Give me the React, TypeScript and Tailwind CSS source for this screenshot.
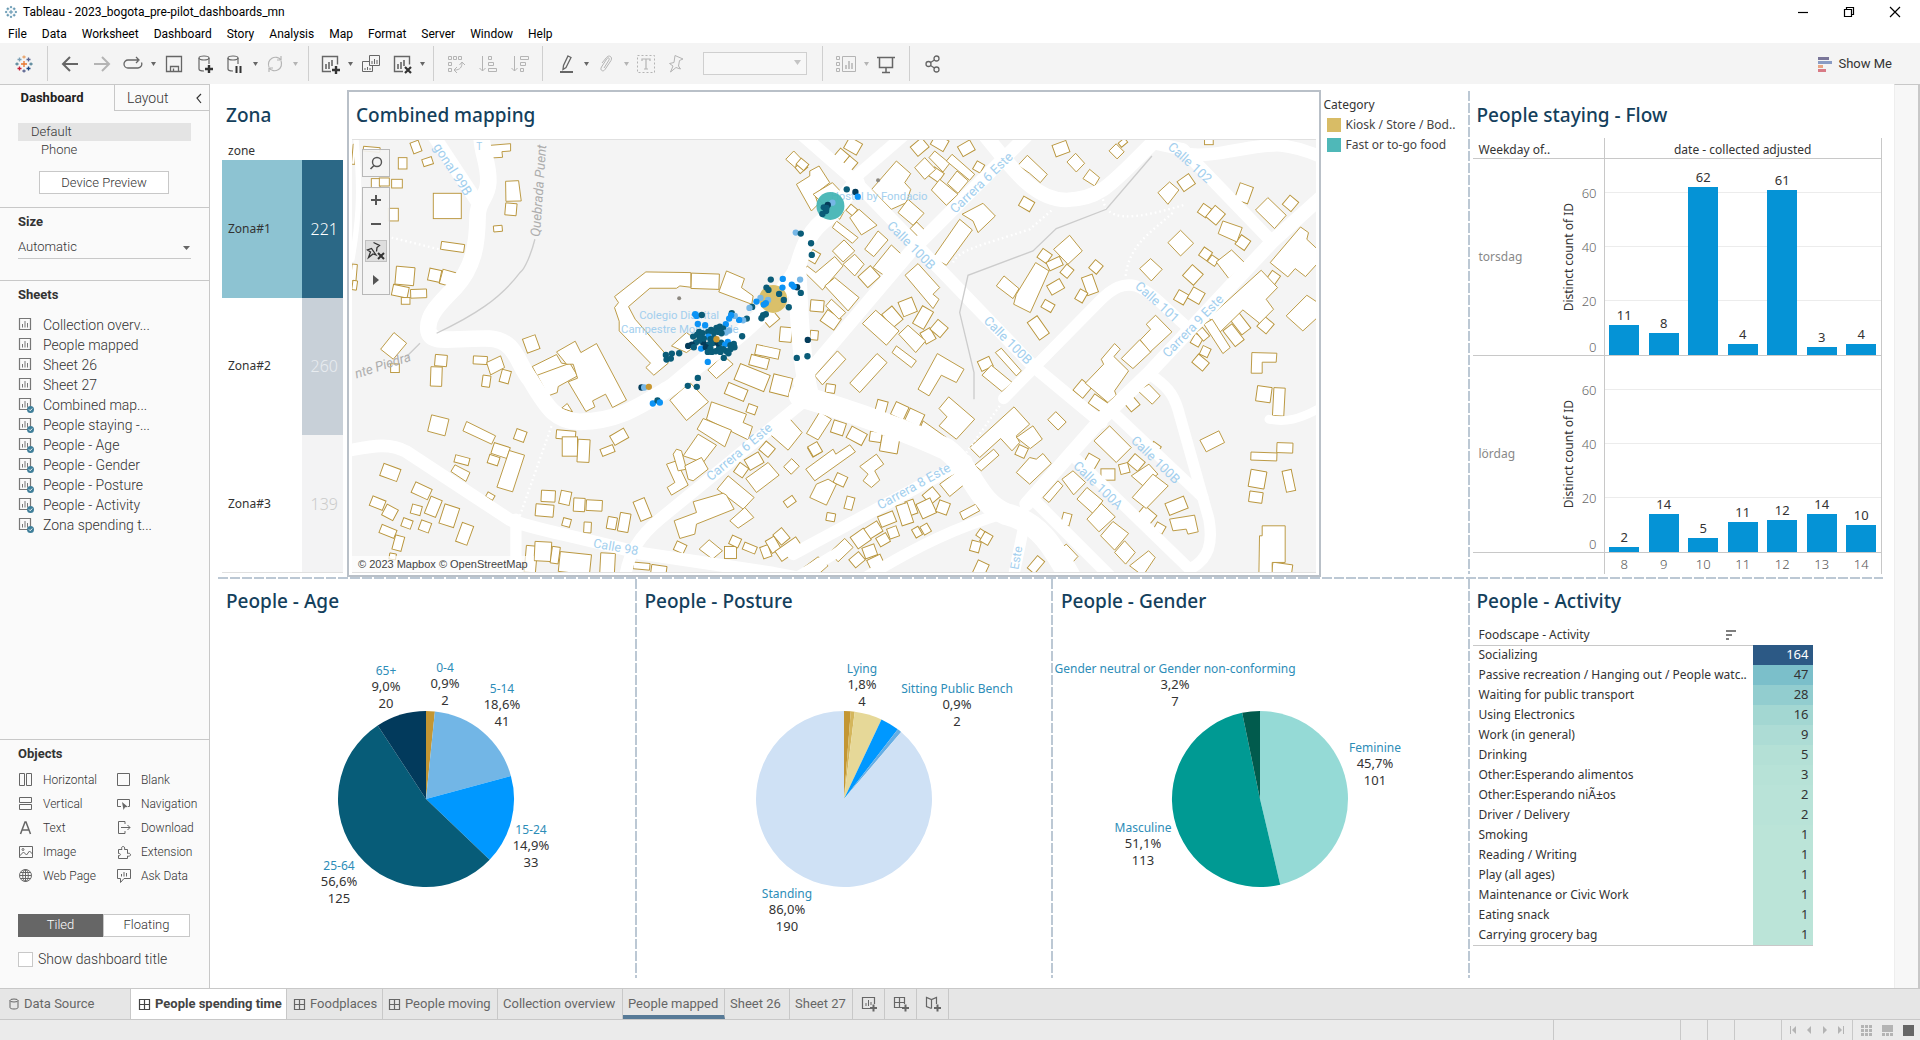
import React from "react";

type Children = { children: React.ReactNode };

/* ------------------------------------------------------------------ icons */

function Svg({ size = 20, className = "", children }: { size?: number; className?: string; children: React.ReactNode }) {
  return (
    <svg
      width={size}
      height={size}
      viewBox={`0 0 ${size} ${size}`}
      fill="none"
      stroke="currentColor"
      strokeWidth="1"
      className={`shrink-0 ${className}`}
      aria-hidden="true"
    >
      {children}
    </svg>
  );
}

function TableauLogo({ mono = false, size = 20 }: { mono?: boolean; size?: number }) {
  const pick = (c: string) => (mono ? "#4a86a5" : c);
  const crosses: [number, number, number, string][] = [
    [10, 10, 3, "#e8762c"],
    [5.5, 5.5, 2, "#7b9fb5"],
    [14.5, 5.5, 2, "#5b6591"],
    [5.5, 14.5, 2, "#c72037"],
    [14.5, 14.5, 2, "#1f457e"],
    [10, 3, 1.6, "#e8a26a"],
    [10, 17, 1.6, "#5b6591"],
    [3, 10, 1.6, "#59879b"],
    [17, 10, 1.6, "#59879b"],
  ];
  return (
    <svg width={size} height={size} viewBox="0 0 20 20" strokeWidth="1.3" aria-hidden="true">
      {crosses.map(([x, y, r, c]) => (
        <path key={`${x}-${y}`} d={`M${x - r} ${y}H${x + r}M${x} ${y - r}V${y + r}`} stroke={pick(c)} />
      ))}
    </svg>
  );
}

const Plus = ({ x, y }: { x: number; y: number }) => <path d={`M${x - 4} ${y}h8M${x} ${y - 4}v8`} strokeWidth="2.4" stroke="#333" />;

const icons = {
  back: (
    <Svg>
      <path d="M18 10H3M10 3L3 10l7 7" strokeWidth="2" />
    </Svg>
  ),
  forward: (
    <Svg>
      <path d="M2 10h15M10 3l7 7-7 7" strokeWidth="2" />
    </Svg>
  ),
  redo: (
    <Svg>
      <path d="M15 6H5a4 4 0 0 0 0 8h10a4 4 0 0 0 3.500-5.500M13 3l3 3-3 3" strokeWidth="1.3" />
    </Svg>
  ),
  save: (
    <Svg>
      <path d="M2.500 2.500h15v15h-15zM6.500 17.500v-5h8v5M9.500 14.500v3" strokeWidth="1.3" />
    </Svg>
  ),
  addData: (
    <Svg>
      <ellipse cx="9" cy="4" rx="5" ry="2" strokeWidth="1.2" />
      <path d="M4 4v11c0 1 2 2 5 2M14 4v6" strokeWidth="1.2" />
      <Plus x={14} y={15} />
    </Svg>
  ),
  pauseData: (
    <Svg>
      <ellipse cx="8" cy="4" rx="5" ry="2" strokeWidth="1.2" />
      <path d="M3 4v11c0 1 2 2 5 2M13 4v6" strokeWidth="1.2" />
      <path d="M11.500 12v7M15.500 12v7" strokeWidth="2" stroke="#333" />
    </Svg>
  ),
  refresh: (
    <Svg>
      <path d="M4 13A7 7 0 0 1 16 6M16 7A7 7 0 0 1 4 14M16 2v4h-4M4 18v-4h4" strokeWidth="1.2" />
    </Svg>
  ),
  newSheet: (
    <Svg>
      <path d="M11 17.500H2.500v-15h15v8" strokeWidth="1.4" />
      <path d="M6 10v5M9 8v7M12 6v6" strokeWidth="1.6" />
      <Plus x={16} y={16} />
    </Svg>
  ),
  duplicate: (
    <Svg>
      <path d="M8.500 1.500h10v10h-10zM8 7.500H1.500v10h10V12" />
      <path d="M11 7v3M13.500 5v5M16 6v4M4 14v2M6.500 13v3M9 14v2" />
    </Svg>
  ),
  clearSheet: (
    <Svg>
      <path d="M11 17.500H2.500v-15h15v8" strokeWidth="1.4" />
      <path d="M6 10v5M9 8v7M12 6v6" strokeWidth="1.6" />
      <path d="M13 13l6 6M19 13l-6 6" strokeWidth="2.200" stroke="#333" />
    </Svg>
  ),
  swap: (
    <Svg>
      <path d="M2.500 2.500h3v3h-3zM7.500 2.500h3v3h-3zM12.500 2.500h3v3h-3zM2.500 8.500h3v3h-3zM2.500 14.500h3v3h-3z" />
      <path d="M9 16c5 0 7-3 7-7M13.500 11L16 8l3 3M11 13l-3 3 3 3" />
    </Svg>
  ),
  sortAsc: (
    <Svg>
      <path d="M4.500 2v15M1.500 14l3 3 3-3M10.500 2.500h3v3h-3zM10.500 8.500h5v3h-5zM10.500 14.500h8v3h-8z" />
    </Svg>
  ),
  sortDesc: (
    <Svg>
      <path d="M4.500 2v15M1.500 14l3 3 3-3M10.500 2.500h8v3h-8zM10.500 8.500h5v3h-5zM10.500 14.500h3v3h-3z" />
    </Svg>
  ),
  pen: (
    <Svg>
      <path d="M12 2l3 1.500-5 10-3 2 .500-4z" strokeWidth="1.3" />
      <path d="M4 18h13" strokeWidth="2" />
    </Svg>
  ),
  clip: (
    <Svg>
      <path d="M8 14l5-8c1-2-1-3-2-1.500L5.500 13c-2 3 1.500 5.500 3.500 2.500l6-9c2-4-2.500-6-4.500-3L6 9" />
    </Svg>
  ),
  text: (
    <Svg>
      <path d="M1.500 1.500h17v17h-17z" strokeDasharray="2 2" />
      <path d="M6 7V5h8v2M10 5v10M8 15h4" strokeWidth="1.2" />
    </Svg>
  ),
  pin: (
    <Svg>
      <path d="M9 1.500l8 3.500-3.500 1.500-1 5.500 2 3-4.500-1.500L4.500 18l2.500-6-3.500-2.500L8 8.500z" />
    </Svg>
  ),
  cards: (
    <Svg>
      <path d="M.500 2.500h3v3h-3zM.500 8.500h3v3h-3zM.500 14.500h3v3h-3zM6.500 2.500h13v15h-13z" />
      <path d="M10 11v4M13 7v8M16 9v6" strokeWidth="1.5" />
    </Svg>
  ),
  present: (
    <Svg>
      <path d="M1 3.500h18M3.500 3.500v10h13v-10M10 13.500v5M6 18.500h8" strokeWidth="1.5" />
    </Svg>
  ),
  share: (
    <Svg>
      <circle cx="5.500" cy="10" r="2.500" strokeWidth="1.3" />
      <circle cx="13.500" cy="4.500" r="2.500" strokeWidth="1.3" />
      <circle cx="13.500" cy="15.500" r="2.500" strokeWidth="1.3" />
      <path d="M7.500 8.500l4-2.500M7.500 11.500l4 2.500" strokeWidth="1.3" />
    </Svg>
  ),
};

function Tool({ label, faint, wide, children }: Children & { label: string; faint?: boolean; wide?: boolean }) {
  return (
    <button
      type="button"
      aria-label={label}
      className={`flex h-8 items-center justify-center ${wide ? "w-8" : "w-[30px]"} ${faint ? "text-[#b4b4b4]" : "text-[#666]"}`}
    >
      {children}
    </button>
  );
}

function Caret({ label, faint }: { label: string; faint?: boolean }) {
  return (
    <button type="button" aria-label={label} className={`flex h-8 w-[10px] items-center justify-center ${faint ? "text-[#b4b4b4]" : "text-[#666]"}`}>
      <svg width="5" height="4" viewBox="0 0 5 4" fill="currentColor" aria-hidden="true">
        <path d="M0 0h5L2.500 4z" />
      </svg>
    </button>
  );
}

const Sep = () => <div className="h-[35px] w-px shrink-0 bg-[#cfcfcf]" />;

/* ------------------------------------------------------------ window chrome */

function TitleBar() {
  return (
    <header className="flex h-6 items-center bg-white font-['Roboto',sans-serif] text-xs text-black">
      <span className="ml-[3px] flex size-4 items-center justify-center">
        <TableauLogo mono size={14} />
      </span>
      <h1 className="ml-1">Tableau - 2023_bogota_pre-pilot_dashboards_mn</h1>
      <div className="ml-auto flex pr-[2px]">
        <button type="button" aria-label="Minimize" className="flex h-5 w-[46px] items-center justify-center">
          <Svg size={12}>
            <path d="M1 6.500h10" strokeWidth="1.2" />
          </Svg>
        </button>
        <button type="button" aria-label="Restore" className="flex h-5 w-[46px] items-center justify-center">
          <Svg size={12}>
            <path d="M1.500 3.500h7v7h-7zM3.500 3.500v-2h7v7h-2" strokeWidth="1.2" />
          </Svg>
        </button>
        <button type="button" aria-label="Close" className="flex h-5 w-[46px] items-center justify-center">
          <Svg size={12}>
            <path d="M1 1l10 10M11 1L1 11" strokeWidth="1.2" />
          </Svg>
        </button>
      </div>
    </header>
  );
}

function MenuBar() {
  const items = ["File", "Data", "Worksheet", "Dashboard", "Story", "Analysis", "Map", "Format", "Server", "Window", "Help"];
  return (
    <nav className="flex h-[19px] items-center gap-[15px] bg-white px-2 font-['Roboto',sans-serif] text-xs text-black">
      {items.map((item) => (
        <button type="button" key={item}>
          {item}
        </button>
      ))}
    </nav>
  );
}

function Toolbar() {
  return (
    <div className="flex h-[41px] items-center bg-[#f4f4f4]">
      <div className="flex w-[47px] justify-center">
        <TableauLogo />
      </div>
      <Sep />
      <div className="flex pr-2 pl-[6px]">
        <Tool label="Back" wide>{icons.back}</Tool>
        <Tool label="Forward" wide faint>{icons.forward}</Tool>
        <Tool label="Redo">{icons.redo}</Tool>
        <Caret label="Redo options" />
        <Tool label="Save" wide>{icons.save}</Tool>
        <Tool label="New data source">{icons.addData}</Tool>
        <Tool label="Pause auto updates">{icons.pauseData}</Tool>
        <Caret label="Update options" />
        <Tool label="Refresh" faint>{icons.refresh}</Tool>
        <Caret label="Refresh options" faint />
      </div>
      <Sep />
      <div className="flex px-[6px]">
        <Tool label="New worksheet">{icons.newSheet}</Tool>
        <Caret label="New worksheet options" />
        <Tool label="Duplicate" wide>{icons.duplicate}</Tool>
        <Tool label="Clear sheet">{icons.clearSheet}</Tool>
        <Caret label="Clear options" />
      </div>
      <Sep />
      <div className="flex px-[6px]">
        <Tool label="Swap rows and columns" wide faint>{icons.swap}</Tool>
        <Tool label="Sort ascending" wide faint>{icons.sortAsc}</Tool>
        <Tool label="Sort descending" wide faint>{icons.sortDesc}</Tool>
      </div>
      <Sep />
      <div className="flex items-center pr-[15px] pl-2">
        <Tool label="Highlight">{icons.pen}</Tool>
        <Caret label="Highlight options" />
        <Tool label="Group members" faint>{icons.clip}</Tool>
        <Caret label="Group options" faint />
        <Tool label="Show mark labels" faint>{icons.text}</Tool>
        <Tool label="Fix axes" faint>{icons.pin}</Tool>
        <div className="relative ml-3">
          <select aria-label="Fit" disabled defaultValue="" className="block h-[23px] w-[104px] appearance-none border border-[#cfcfcf] bg-[#f7f7f7]">
            <option value="" />
          </select>
          <span className="pointer-events-none absolute top-2 right-[6px] text-[#c4c4c4]">
            <svg width="7" height="5" viewBox="0 0 7 5" fill="currentColor" aria-hidden="true">
              <path d="M0 0h7L3.500 5z" />
            </svg>
          </span>
        </div>
      </div>
      <Sep />
      <div className="flex px-2">
        <Tool label="Show cards" faint>{icons.cards}</Tool>
        <Caret label="Card options" faint />
        <Tool label="Presentation mode">{icons.present}</Tool>
      </div>
      <Sep />
      <div className="flex px-[7px]">
        <Tool label="Share" wide>{icons.share}</Tool>
      </div>
      <button type="button" className="mr-7 ml-auto flex items-center gap-[6px] font-['Roboto',sans-serif] text-[13px] text-[#333]">
        <svg width="14" height="16" viewBox="0 0 14 16" aria-hidden="true">
          <path d="M0 1h11v3H0z" fill="#7a7699" />
          <path d="M0 5h14v3H0z" fill="#8a9cc4" />
          <path d="M0 9h5v3H0z" fill="#e8a583" />
          <path d="M0 13h8v3H0z" fill="#d87a85" />
        </svg>
        Show Me
      </button>
    </div>
  );
}

/* ---------------------------------------------------------------- side pane */

function SheetIcon({ used }: { used: boolean }) {
  return (
    <Svg size={17} className="text-[#777]">
      <path d="M1.500 1.500h11v11h-11z" strokeWidth="1.2" />
      <path d="M4.500 7v3.500M7 4v6.500M9.500 6v4.500" />
      {used && (
        <>
          <circle cx="12.500" cy="12.500" r="3.500" fill="#3f7f9a" stroke="none" />
          <path d="M11 12.500l1.200 1.200 2-2.200" stroke="#fff" />
        </>
      )}
    </Svg>
  );
}

const sheets: [string, boolean][] = [
  ["Collection overv...", false],
  ["People mapped", false],
  ["Sheet 26", false],
  ["Sheet 27", false],
  ["Combined map...", true],
  ["People staying -...", true],
  ["People - Age", true],
  ["People - Gender", true],
  ["People - Posture", true],
  ["People - Activity", true],
  ["Zona spending t...", true],
];

const objects: [string, React.ReactNode][] = [
  ["Horizontal", <path d="M1.500 1.500h5v12h-5zM8.500 1.500h5v12h-5z" />],
  ["Blank", <path d="M1.500 1.500h12v12h-12z" />],
  ["Vertical", <path d="M1.500 1.500h12v5h-12zM1.500 8.500h12v5h-12z" />],
  ["Navigation", <><path d="M5 10.500H1.500v-7h12v7H12" /><path d="M6 6l6 5-3 .300L7.500 14z" fill="currentColor" stroke="none" /></>],
  ["Text", <path d="M2.500 14L7 2h1l4.500 12M4 10h7" strokeWidth="1.5" />],
  ["Download", <path d="M9 4V1.500H2.500v12H9V11M5 7.500h9M11.500 5L14 7.500 11.500 10" />],
  ["Image", <><path d="M1.500 2.500h13v11h-13zM1.500 12l4-4 3 3 3-4 3 3" /><circle cx="5" cy="5.500" r="1" /></>],
  ["Extension", <path d="M2.500 14.500v-3c2 1 3-2.500 0-2V5.500H6c-2-4 4-4 2.500 0h3v4c4-1.500 4 4 0 2.500v2.500z" />],
  ["Web Page", <><circle cx="7.500" cy="7.500" r="6" /><ellipse cx="7.500" cy="7.500" rx="2.800" ry="6" /><path d="M1.500 7.500h12M2.500 4.500h10M2.500 10.500h10M7.500 1.500v12" /></>],
  ["Ask Data", <path d="M1.500 1.500h13v9H8l-3.500 4v-4h-3zM5.500 6v2.500M8 4v4.500M10.500 5v3.500" />],
];

function SidePane() {
  return (
    <aside className="flex w-[210px] shrink-0 flex-col border-t border-r border-[#c8c8c8] bg-[#fafafa] font-['Roboto',sans-serif] text-sm font-light text-[#333]">
      <div className="flex h-[26px]">
        <button type="button" className="w-[114px] text-[13px] font-bold text-[#222]">
          <span className="pr-[10px]">Dashboard</span>
        </button>
        <div className="flex flex-1 items-center justify-between border-b border-l border-[#c8c8c8] pr-1 pl-3">
          <button type="button">Layout</button>
          <button type="button" aria-label="Collapse pane">
            <Svg size={12}>
              <path d="M8 2L4 6l4 5" strokeWidth="1.2" />
            </Svg>
          </button>
        </div>
      </div>
      <div className="flex h-24 flex-col px-[18px] pt-3 text-[13px] leading-[18px]">
        <button type="button" className="bg-[#e4e4e4] pl-[13px] text-left">Default</button>
        <button type="button" className="pl-[23px] text-left">Phone</button>
        <button type="button" className="mt-3 ml-[21px] h-[23px] w-[130px] border border-[#c8c8c8] bg-white">
          Device Preview
        </button>
      </div>
      <div className="h-[73px] border-t border-[#c8c8c8] px-[18px] pt-[6px]">
        <label htmlFor="size" className="block text-[13px] leading-4 font-bold text-[#333]">Size</label>
        <div className="relative mt-[7px]">
          <select id="size" defaultValue="Automatic" className="block h-[22px] w-full appearance-none border-b border-[#c8c8c8] bg-transparent pb-px text-[13px] font-light">
            <option>Automatic</option>
          </select>
          <span className="pointer-events-none absolute top-[9px] right-px">
            <svg width="7" height="4" viewBox="0 0 7 4" fill="#666" className="block" aria-hidden="true">
              <path d="M0 0h7L3.500 4z" />
            </svg>
          </span>
        </div>
      </div>
      <div className="border-t border-[#c8c8c8] px-[18px] pt-[6px]">
        <h2 className="text-[13px] leading-4 font-bold text-[#333]">Sheets</h2>
        <ul className="mt-3">
          {sheets.map(([name, used]) => (
            <li key={name} className="flex h-5 items-center gap-2">
              <SheetIcon used={used} />
              {name}
            </li>
          ))}
        </ul>
      </div>
      <div className="mt-auto border-t border-[#c8c8c8] px-[18px] pt-[6px] pb-[21px]">
        <h2 className="text-[13px] leading-4 font-bold text-[#333]">Objects</h2>
        <ul className="mt-[6px] grid grid-cols-[98px_1fr] text-xs">
          {objects.map(([name, drawing]) => (
            <li key={name} className="flex h-6 items-center gap-[9px] whitespace-nowrap">
              <Svg size={16} className="text-[#666]">{drawing}</Svg>
              {name}
            </li>
          ))}
        </ul>
        <div className="mt-[26px] mr-px flex h-[23px] text-[13px]">
          <button type="button" className="flex-1 bg-[#666] text-white">Tiled</button>
          <button type="button" className="flex-1 border border-[#c8c8c8] bg-white">Floating</button>
        </div>
        <label className="mt-[14px] flex items-center gap-[5px] leading-4">
          <input type="checkbox" className="size-[15px] appearance-none border border-[#c8c8c8] bg-white" />
          Show dashboard title
        </label>
      </div>
    </aside>
  );
}

/* --------------------------------------------------------------------- map */

/** Rotated rectangles: centre x, centre y, width, height, angle. */
const blocksWest =
  "228,183,26,34,-20;188,232,26,34,0;263,227,30,22,-18;322,360,84,76,0;513,370,34,36,5;474,428,26,18,-5;338,483,70,24,8;195,570,56,54,5;107,292,26,28,0;133,288,30,24,0;171,293,32,26,0;160,386,30,38,0;181,616,48,32,12;236,623,48,26,-2;197,645,26,20,0;284,568,36,36,12;325,577,44,44,15;42,560,16,50,5;44,598,14,28,8;95,190,50,14,5;42,205,10,60,5;165,847,26,26,0;303,824,36,34,5;289,872,34,58,2;421,823,42,24,3;439,886,24,34,8;496,872,28,38,15;574,774,40,44,-20;1096,586,84,46,2;1283,798,72,30,12;1258,828,56,32,15;1237,875,96,52,22;1324,898,58,56,14;1189,918,62,36,22;1338,746,36,44,5;1295,700,40,30,-40;1236,970,28,26,20;1204,1153,32,34,35;1243,1126,48,36,-30;1282,1090,36,34,40;1355,1142,34,32,-45;1425,1092,32,32,-30;1350,1247,32,22,-35;908,1271,36,62,-22;853,1310,32,56,10;816,1312,28,36,10;541,1049,32,32,20;838,1053,48,32,-30;803,1094,40,22,-22;678,1047,58,26,5;690,1082,46,58,0;731,1095,36,68,3;482,1094,50,34,18;461,1123,32,26,18;366,1123,44,22,15;151,1160,54,38,20;245,1215,54,34,25;451,1231,24,16,30;113,1252,42,30,22;150,1280,38,36,28;229,1272,30,28,15;280,1263,36,54,22;328,1290,46,60,18;201,1313,30,26,20;255,1322,32,30,20;374,1344,36,60,20;144,1337,48,26,22;175,1372,28,44,15;158,1412,20,18,10;625,1231,42,34,3;676,1236,32,40,12;614,1274,54,36,5;718,1257,34,40,3;763,1259,48,32,3;680,1310,24,24,15;743,1325,22,32,3;573,1420,34,80,5;609,1397,50,58,3;646,1408,24,50,8;705,1432,94,60,6;803,1435,44,66,3;905,1441,50,20,5;957,1452,46,26,8;1021,1385,32,28,25;1172,1400,36,36,0;1186,1367,30,28,25;1230,1387,40,22,22;1278,1398,26,36,-20;1300,1377,30,42,-30;1325,1352,34,40,-40;1347,1390,76,36,-35;1385,244,30,24,-40;1472,908,28,26,8;1473,1294,26,24,10";

const blocksEast =
  "160,180,44,38,30;122,215,44,36,-50;148,237,44,32,-50;8,235,30,24,40;353,430,34,28,45;410,266,36,32,35;537,243,26,28,30;500,187,42,34,-30;360,183,44,36,-40;420,170,44,36,30;784,188,44,36,-20;951,196,34,30,45;970,170,24,16,-40;681,354,38,32,30;1228,168,26,16,0;1160,290,42,36,-35;1333,322,42,52,20;1473,352,34,36,40;1215,374,30,32,35;1248,388,40,44,40;1330,470,34,34,35;1218,504,30,30,35;1241,524,26,24,35;1180,567,44,44,42;1145,634,34,34,30;1190,629,40,38,30;1421,576,30,34,35;1398,718,36,38,40;1322,713,34,60,-38;1302,748,34,60,-38;1192,763,28,32,30;1210,745,24,34,-40;1217,797,26,28,25;1203,830,42,32,40;1393,925,44,46,8;1438,948,34,84,3;1456,1086,48,30,2;1393,1112,78,24,2;1374,1180,48,52,10;1468,1185,28,64,-12;1369,1234,40,32,8;1447,1455,60,44,8;1131,1260,60,38,-22;1042,1288,48,36,40;1080,1327,30,26,30;1010,1130,40,36,40;974,1148,28,30,-15;925,1166,42,34,0;876,1126,38,34,30;1068,1083,28,20,35;998,955,34,32,-40;848,909,38,42,40;896,952,50,34,35;735,510,34,32,35;765,533,44,28,-25;802,556,28,32,40;889,543,30,32,40;768,603,44,32,-30;745,660,34,26,30;871,597,34,56,-20;845,630,26,34,30;716,726,36,64,-35;324,663,44,46,-22;278,693,40,52,-40;370,695,38,60,30;385,750,34,38,-30;418,728,40,38,40;245,963,32,38,15;300,975,42,42,25;345,995,48,40,25;666,1097,30,32,25;772,1005,34,44,-45;557,834,38,32,-25;208,572,50,44,-42;93,702,50,40,35;52,660,40,34,5;42,512,28,34,30;156,372,26,24,40;43,748,24,28,5;116,1026,38,38,18;171,1050,52,38,28;228,1053,36,30,8;270,1075,54,50,10;46,1090,32,34,-30;122,1182,34,32,25;149,1252,24,38,15;395,1230,40,38,-40;380,1268,46,48,-25;430,1265,34,36,20;335,1265,26,44,-20;315,1285,36,62,-18;262,1300,48,34,-22;220,1333,48,36,-32;183,1358,48,42,-35;280,1340,30,32,-20;250,1362,34,30,-30;210,1397,38,34,-20;172,1422,38,32,-40;228,1430,44,34,-25;352,1339,22,28,-30;378,1330,24,28,-30;545,1345,24,24,35;560,1358,28,32,30;527,1382,28,32,15;543,1450,36,44,25;709,1437,28,48,40;800,1300,26,36,15";

const plotsWest = [
  "451,178 512,173 512,195 486,197 488,214 452,216",
  "497,286 536,284 544,345 498,346",
  "162,740 200,772 160,820 122,790",
  "440,830 482,810 494,845 452,867",
  "577,842 650,806 665,832 690,835 603,890",
  "592,868 690,832 713,870 655,902 652,920 625,930",
  "650,798 706,766 723,800 770,773 860,943 818,965 797,925 758,945 765,963 738,977 685,888 713,877 700,835 680,835",
  "665,967 682,953 698,978",
  "824,632 918,558 1053,560 1053,604 1020,600 1010,607 930,607 866,662 886,700 978,805 985,832 942,868 918,845 932,832 838,735 838,706 824,665 836,650",
  "1160,555 1214,578 1205,605 1240,630 1236,655 1137,618",
  "995,780 1040,740 1080,770 1040,800",
  "1104,852 1150,808 1180,835 1130,878",
  "990,943 1050,890 1106,948 1040,1004",
  "1115,948 1220,985 1210,1010 1238,1022 1225,1062 1100,1000",
  "1090,998 1175,1033 1155,1083 1072,1030",
  "1075,1045 1130,1078 1090,1130 1030,1110",
  "980,1135 1010,1125 1045,1198 995,1228 982,1205 1005,1190",
  "1010,1090 1025,1095 1040,1150 1015,1155 1000,1105",
  "1035,1140 1085,1115 1105,1150 1060,1185 1045,1180",
  "1218,1178 1285,1130 1318,1168 1250,1220",
  "1290,1045 1345,993 1387,1040 1345,1093",
  "1165,1170 1243,1235 1210,1270 1132,1210",
  "1060,1248 1150,1222 1160,1228 1183,1270 1070,1315 1065,1345 1020,1358 1003,1305 1070,1280",
  "1170,1305 1215,1265 1242,1295 1195,1327",
  "275,987 327,1000 315,1050 263,1036",
  "380,1007 467,1050 455,1075 369,1035",
  "508,1094 554,1108 518,1218 471,1204",
  "333,1157 345,1137 390,1160 378,1187",
  "1078,1390 1108,1362 1148,1395 1118,1420",
  "1338,220 1362,195 1388,222 1364,243",
  "1410,255 1438,240 1470,290 1425,325 1435,355 1415,375 1370,295 1410,270",
];

const plotsEast = [
  "216,310 290,225 333,263 315,290 333,310 320,350 275,370 250,345",
  "295,380 325,340 373,382 340,418",
  "345,245 375,215 408,250 375,280",
  "405,195 450,232 430,258 388,215",
  "457,205 525,265 510,283 440,225",
  "443,293 472,255 506,285 475,322",
  "395,312 420,280 475,325 440,358",
  "487,385 550,352 587,390 535,440 520,405",
  "480,400 518,432 440,538 400,515",
  "683,208 743,265 722,290 690,262 655,238",
  "802,228 828,202 855,232 830,258",
  "850,278 870,250 900,275 885,300",
  "1075,320 1110,288 1138,312 1105,355",
  "1368,372 1405,335 1460,388 1425,428",
  "1270,405 1328,425 1312,468 1256,443",
  "1105,470 1143,433 1182,472 1143,510",
  "1020,548 1053,518 1088,550 1055,585",
  "1250,528 1296,492 1335,530 1288,578",
  "1412,530 1503,423 1527,440 1522,460 1570,505 1570,515 1518,572 1487,548 1465,573",
  "1228,695 1385,553 1434,605 1400,640 1422,670 1380,712 1330,672 1260,740",
  "1460,690 1522,628 1570,660 1570,680 1510,735",
  "1213,715 1238,700 1292,785 1270,803",
  "1357,800 1432,802 1430,829 1388,829 1388,862 1355,862",
  "1388,1320 1457,1320 1457,1430 1418,1430 1418,1470 1378,1470 1380,1350 1388,1350",
  "1201,1063 1258,1035 1275,1070 1220,1098",
  "1110,1300 1185,1288 1196,1338 1165,1345 1160,1330 1120,1335",
  "995,1170 1048,1135 1075,1165 1030,1200",
  "998,1235 1060,1165 1106,1200 1040,1268",
  "883,1065 930,1020 995,1085 950,1130",
  "1015,915 1048,895 1082,930 1058,955",
  "965,818 1020,762 1055,797 1000,848",
  "1040,715 1068,688 1117,738 1052,798 1022,762 1053,730",
  "905,820 945,773 962,790 943,812 987,855 945,915 950,928 925,950 857,892 912,835",
  "650,625 708,530 748,555 692,680 642,655",
  "590,600 613,570 658,608 640,638",
  "762,490 810,448 848,495 805,535",
  "316,568 355,533 420,605 400,625 418,640 400,668",
  "188,713 228,673 298,735 260,778",
  "297,745 325,718 378,765 348,800",
  "290,780 350,825 335,845 277,800",
  "413,803 493,850 470,890 425,868 388,930 355,910",
  "232,803 262,830 180,920 150,892",
  "113,795 138,820 68,897 45,870",
  "370,1005 440,1055 430,1062 360,1030",
  "447,933 525,1000 470,1060 418,1020 442,993 418,968",
  "510,1085 643,963 690,1015 650,1050 660,1070 637,1095 603,1058 540,1115",
  "650,1055 700,1020 728,1060 692,1088",
  "525,1138 582,1090 598,1108 545,1155",
  "650,1160 690,1115 710,1120 730,1103 755,1133 690,1195",
  "730,1235 775,1185 790,1200 748,1250",
  "787,1180 820,1155 858,1190 822,1227",
  "832,1240 862,1205 910,1245 880,1283",
  "862,1300 905,1253 947,1293 898,1338",
  "903,1350 940,1307 987,1343 945,1393",
  "945,1400 975,1365 1007,1400 978,1435",
  "990,1440 1047,1395 1067,1415 1030,1470",
  "547,868 575,838 638,890 607,917",
  "587,800 605,787 665,855 650,870",
  "98,425 110,405 175,455 158,472",
  "150,395 178,370 232,418 185,447",
  "195,490 235,435 265,462 222,512",
  "220,545 275,477 305,505 255,570",
  "98,495 133,462 165,495 130,528",
  "130,535 165,505 193,535 165,570",
  "10,555 22,540 48,560 105,512 130,540 68,612",
  "75,600 105,575 178,635 145,675",
  "78,660 95,640 138,680 118,700",
  "20,1043 60,978 95,1000 55,1062",
  "18,1150 100,1090 108,1105 150,1077 167,1098 45,1185",
  "180,1142 230,1105 252,1135 225,1155 240,1183 215,1205 190,1185 205,1165",
  "50,1195 85,1180 110,1195 80,1258 30,1235",
  "420,1195 468,1160 495,1195 450,1232",
  "480,1280 528,1255 540,1275 490,1302",
  "90,1400 135,1358 160,1385 115,1428",
  "12,1445 55,1413 85,1440 45,1475",
  "775,1395 800,1375 835,1412 810,1440",
  "40,325 98,290 150,345 120,400",
];

function Buildings({ blocks, plots }: { blocks: string; plots: string[] }) {
  return (
    <g fill="#fff" stroke="#b8943a" strokeWidth="2.800">
      {blocks.split(";").map((entry) => {
        const [cx, cy, w, h, a] = entry.split(",").map(Number);
        return <rect key={entry} x={cx - w / 2} y={cy - h / 2} width={w} height={h} transform={`rotate(${a} ${cx} ${cy})`} />;
      })}
      {plots.map((points) => (
        <polygon key={points} points={points} />
      ))}
    </g>
  );
}

const dotColors: Record<string, string> = { N: "#0a5c78", D: "#043c5a", B: "#0c93f5", L: "#76b7e6", O: "#c8962f" };

const dots =
  "1368,440,L;1383,443,N;1414,472,N;1416,507,N;1293,581,N;1329,579,B;1381,581,L;1372,604,D;1356,596,B;1362,602,B;1383,621,N;1280,605,N;1286,612,N;1328,605,B;1318,624,N;1332,642,N;1347,664,N;1404,762,D;1403,811,N;1371,816,N;1262,636,L;1285,642,L;1250,647,B;1278,652,B;1272,656,B;1237,663,N;1229,666,L;1278,685,N;1270,688,N;1265,697,N;1221,698,N;1210,703,L;1198,702,B;1176,682,N;1185,690,L;1174,688,B;1168,698,B;1158,715,B;1066,685,B;1070,690,B;1086,687,N;1074,714,B;1096,718,B;1207,751,N;1078,738,N;1060,752,N;1072,746,N;1105,738,N;1114,732,N;1122,740,N;1130,726,N;1140,722,N;1135,738,N;1150,728,N;1158,740,L;1168,734,L;1145,742,N;1106,752,B;1112,760,N;1122,756,N;1118,772,N;1106,776,N;1090,770,D;1078,764,N;1068,770,N;1056,776,D;1045,780,D;1062,784,N;1084,788,B;1092,758,N;1098,784,D;1112,788,N;1104,798,N;1116,798,N;1128,796,N;1138,786,N;1134,772,D;1144,770,N;1156,776,B;1164,768,B;1172,778,N;1182,774,N;1184,784,N;1172,790,N;1160,796,N;1150,790,N;1142,798,N;1166,802,N;1088,742,N;1080,754,N;1152,816,N;978,807,N;996,803,N;1018,802,N;980,821,N;993,818,N;1104,828,B;1074,876,N;1044,900,N;1071,903,N;905,905,D;913,905,L;927,903,O;939,953,B;953,944,N;960,950,B;1130,760,O;1521,310,N;1547,318,D;1554,332,B;1478,350,L;1452,364,N;1464,357,D;1459,375,N;1448,384,N;1460,366,N";

function MapLabel({ x, y, angle = 0, size = 36, color = "#a3cfee", italic, children }: Children & { x: number; y: number; angle?: number; size?: number; color?: string; italic?: boolean }) {
  return (
    <text
      x={x}
      y={y}
      transform={`rotate(${angle} ${x} ${y})`}
      textAnchor="middle"
      dominantBaseline="central"
      fontSize={size}
      fill={color}
      fontStyle={italic ? "italic" : "normal"}
    >
      {children}
    </text>
  );
}

function CityMap() {
  return (
    <svg
      viewBox="36 162 2892 1302"
      preserveAspectRatio="xMinYMin slice"
      className="h-full w-full bg-[#f4f4f4] font-['Roboto',sans-serif]"
      role="img"
      aria-label="Street map with recorded positions"
    >
      <Buildings blocks={blocksWest} plots={plotsWest} />
      <g transform="translate(1380 0)">
        <Buildings blocks={blocksEast} plots={plotsEast} />
      </g>
      <g fill="none" stroke="#fff" strokeLinecap="round" strokeLinejoin="round">
        <g strokeWidth="50">
          <path d="M425 150C425 200 448 235 445 290C443 335 413 345 413 390C412 480 400 545 345 605C295 655 262 690 265 730C270 780 330 755 450 758C530 765 530 830 570 880C620 960 640 1005 720 1008C840 1005 900 960 1000 900C1060 850 1110 805 1170 770C1260 700 1330 620 1372 550C1390 480 1410 430 1470 390L1550 290" />
          <path d="M1372 550C1378 700 1385 830 1410 930" strokeWidth="56" />
        </g>
        <path d="M275 140L420 360" strokeWidth="40" />
        <path d="M36 1092C100 1080 150 1070 200 1098L510 1302C560 1325 700 1350 900 1402L1300 1462L1500 1500" strokeWidth="38" />
        <path d="M528 1300V1480" strokeWidth="34" />
        <path d="M855 1480C865 1400 900 1350 960 1300L1400 940" strokeWidth="36" />
        <path d="M1360 1480L1510 1390" strokeWidth="30" />
        <path d="M48 160C60 300 60 380 36 520" strokeWidth="16" />
        <g transform="translate(1380 0)">
          <path d="M0 140L160 280L700 840L905 1010" strokeWidth="38" />
          <path d="M930 970L1210 1235" strokeWidth="34" />
          <path d="M165 275L310 150" strokeWidth="36" />
          <path d="M0 890L330 500L680 150" strokeWidth="40" />
          <path d="M550 140C640 250 700 340 800 342C900 340 930 300 1055 175" strokeWidth="44" />
          <path d="M1055 170L1150 190L1415 465" strokeWidth="38" />
          <path d="M1170 205C1250 215 1350 175 1440 178C1500 185 1540 200 1580 220" strokeWidth="38" />
          <path d="M1580 320L1420 465L1050 860L900 1005L680 1255" strokeWidth="42" />
          <path d="M612 938L900 645C940 605 970 590 1010 600C1060 620 1100 670 1165 725" strokeWidth="34" />
          <path d="M0 930C150 975 300 1025 440 1090C520 1150 530 1250 620 1285C720 1310 760 1380 820 1490" strokeWidth="66" />
          <path d="M-20 1405L500 1125" strokeWidth="36" />
          <path d="M190 1480C350 1380 480 1320 620 1280" strokeWidth="34" />
          <path d="M1050 865C1100 900 1120 920 1135 970L1228 1300C1240 1370 1230 1420 1170 1450L830 1120" strokeWidth="34" />
          <path d="M700 1240L940 1480" strokeWidth="36" />
          <path d="M675 1310L640 1480" strokeWidth="34" />
          <path d="M1408 1000C1450 1010 1500 1005 1580 955" strokeWidth="26" />
        </g>
        <g strokeWidth="7" strokeDasharray="5 9" strokeLinecap="butt">
          <path d="M155 455L305 492M540 1290L635 1020" />
          <path d="M1840 530C1860 490 1920 480 2070 430L2140 370M2290 340C2300 400 2360 410 2540 355M2358 570C2370 480 2420 450 2500 380M1980 960L1880 1100" />
        </g>
      </g>
      <g fill="none" stroke="#ccc" strokeWidth="4">
        <path d="M585 460C575 500 555 550 540 560C480 640 400 690 290 742M240 772L200 812" />
        <path d="M2437 210L2300 370L2150 428L2080 495L1885 568L1860 680L1903 860V940" />
      </g>
      <MapLabel x={338} y={250} angle={57} size={40}>gonal 99B</MapLabel>
      <MapLabel x={418} y={182} size={30}>T</MapLabel>
      <MapLabel x={596} y={314} angle={-86} size={40} color="#adadad" italic>Quebrada Puent</MapLabel>
      <MapLabel x={128} y={838} angle={-18} size={40} color="#adadad" italic>nte Piedra</MapLabel>
      <MapLabel x={1018} y={687} size={34}>Colegio Distrital</MapLabel>
      <MapLabel x={1020} y={730} size={34}>Campestre Monteverde</MapLabel>
      <MapLabel x={1198} y={1098} angle={-40} size={39}>Carrera 6 Este</MapLabel>
      <MapLabel x={828} y={1383} angle={10} size={38}>Calle 98</MapLabel>
      <MapLabel x={1618} y={331} size={34}>Hostal by Fondacio</MapLabel>
      <MapLabel x={1925} y={290} angle={-44} size={39}>Carrera 6 Este</MapLabel>
      <MapLabel x={1715} y={478} angle={45} size={39}>Calle 100B</MapLabel>
      <MapLabel x={2005} y={763} angle={45} size={39}>Calle 100B</MapLabel>
      <MapLabel x={2551} y={230} angle={42} size={39}>Calle 102</MapLabel>
      <MapLabel x={2453} y={648} angle={42} size={39}>Calle 101</MapLabel>
      <MapLabel x={2560} y={720} angle={-46} size={39}>Carrera 9 Este</MapLabel>
      <MapLabel x={2448} y={1122} angle={44} size={39}>Calle 100B</MapLabel>
      <MapLabel x={2275} y={1198} angle={44} size={39}>Calle 100A</MapLabel>
      <MapLabel x={1722} y={1201} angle={-29} size={39}>Carrera 8 Este</MapLabel>
      <MapLabel x={2030} y={1416} angle={-80} size={36}>Este</MapLabel>
      <g fill="#8c8880">
        <circle cx="1018" cy="637" r="6" />
        <circle cx="1615" cy="283" r="6" />
      </g>
      <circle cx="1300" cy="639" r="42" fill="#d6b95a" opacity="0.900" />
      <circle cx="1472" cy="360" r="42" fill="#44b5b5" opacity="0.950" />
      {dots.split(";").map((entry, i) => {
        const [x, y, c] = entry.split(",");
        return <circle key={i} cx={x} cy={y} r="9.500" fill={dotColors[c]} />;
      })}
    </svg>
  );
}

function MapControls() {
  const box = "border border-[#b8b8b8] bg-[#f4f4f4]/90 text-[#555]";
  return (
    <div className="absolute top-[9px] left-[10px] flex w-7 flex-col gap-[10px]">
      <button type="button" aria-label="Search map" className={`flex h-7 items-center justify-center ${box}`}>
        <Svg size={14}>
          <circle cx="8" cy="6" r="4.500" strokeWidth="1.4" />
          <path d="M5 9.500L1.500 13" strokeWidth="1.6" />
        </Svg>
      </button>
      <div className={`flex flex-col items-center ${box}`}>
        <button type="button" aria-label="Zoom in" className="flex h-6 w-full items-center justify-center">
          <Svg size={10}>
            <path d="M0 5h10M5 0v10" strokeWidth="2" />
          </Svg>
        </button>
        <button type="button" aria-label="Zoom out" className="mb-1 flex h-6 w-full items-center justify-center">
          <Svg size={10}>
            <path d="M0 5h10" strokeWidth="2" />
          </Svg>
        </button>
        <button type="button" aria-label="Reset pin" className="flex size-[22px] items-center justify-center border border-[#c0c0c0] bg-[#dedede] text-[#333]">
          <Svg size={20}>
            <path d="M7.500 1.500l6 3-2.500 2-.500 4M10 14l-3-1-4.500 3.500 2-5.500-3-2 4-1.500z" strokeWidth="1.3" />
            <path d="M12 12l6 6M18 12l-6 6" strokeWidth="2" />
          </Svg>
        </button>
        <button type="button" aria-label="Map tools" className="flex h-8 w-full items-center justify-center pt-1">
          <svg width="6" height="10" viewBox="0 0 6 10" fill="currentColor" aria-hidden="true">
            <path d="M0 0l6 5-6 5z" />
          </svg>
        </button>
      </div>
    </div>
  );
}

/* ---------------------------------------------------------------- dashboard */

const PanelTitle = ({ children }: Children) => <h2 className="text-[19px] leading-6 font-medium whitespace-nowrap text-[#14405c]">{children}</h2>;

/** Dashed divider strips between the tiled panels. */
const DashV = () => <div className="w-[2px] shrink-0 bg-[repeating-linear-gradient(to_bottom,#bcc8d4_0_10px,transparent_10px_12px)]" />;
const DashH = () => <div className="mr-px h-[2px] shrink-0 bg-[repeating-linear-gradient(to_right,#bcc8d4_0_10px,transparent_10px_12px)]" />;

function ZonaPanel() {
  const rows = [
    { name: "Zona#1", value: 221, left: "bg-[#8dc3d2]", right: "bg-[#2b6886] text-white" },
    { name: "Zona#2", value: 260, left: "bg-white", right: "bg-[#c8d0d8] text-[#e8ecf0]" },
    { name: "Zona#3", value: 139, left: "bg-white", right: "bg-[#f3f3f4] text-[#cbcbcb]" },
  ];
  return (
    <section className="flex w-[129px] shrink-0 flex-col px-1 pb-1">
      <div className="pt-[13px] pl-1">
        <PanelTitle>Zona</PanelTitle>
      </div>
      <div className="mt-4 pb-px pl-[6px] text-xs leading-4 text-[#333]">zone</div>
      <table className="w-full flex-1 border-collapse border-b border-[#e0e0e0]">
        <tbody>
          {rows.map((r) => (
            <tr key={r.name} className="h-1/3">
              <th className={`pl-[6px] text-left text-xs font-normal text-[#333] ${r.left}`}>{r.name}</th>
              <td className={`w-[41px] pr-[5px] text-right text-base font-light ${r.right}`}>{r.value}</td>
            </tr>
          ))}
        </tbody>
      </table>
    </section>
  );
}

function MapPanel() {
  return (
    <section className="flex min-w-0 flex-1 flex-col border-2 border-[#b9c0c8] px-[3px] pb-[2px]">
      <div className="px-1 pt-[11px] pb-3">
        <PanelTitle>Combined mapping</PanelTitle>
      </div>
      <div className="relative h-[434px] border-y border-[#e0e0e0]">
        <CityMap />
        <MapControls />
        <p className="absolute bottom-0 left-0 bg-white/70 px-[6px] font-['Liberation_Sans',sans-serif] text-[11px] leading-4 text-[#444]">
          © 2023 Mapbox © OpenStreetMap
        </p>
      </div>
    </section>
  );
}

function Legend() {
  return (
    <section className="w-[147px] shrink-0 pt-[7px] pl-[3px] text-xs text-[#444]">
      <h3 className="leading-4 text-[#333]">Category</h3>
      <ul className="pt-[2px] pl-[3px]">
        <li className="flex h-5 items-center gap-[5px] whitespace-nowrap">
          <span className="size-[14px] bg-[#d8bc66]" />
          Kiosk / Store / Bod..
        </li>
        <li className="flex h-5 items-center gap-[5px] whitespace-nowrap">
          <span className="size-[14px] bg-[#4fb8b8]" />
          Fast or to-go food
        </li>
      </ul>
    </section>
  );
}

const hours = [8, 9, 10, 11, 12, 13, 14];
const flow = [
  { day: "torsdag", values: [11, 8, 62, 4, 61, 3, 4] },
  { day: "lördag", values: [2, 14, 5, 11, 12, 14, 10] },
];
const axisMax = 72.4;

function FlowPanel() {
  return (
    <section className="flex min-w-0 flex-1 flex-col pr-[2px] pl-[3px] text-xs text-[#333]">
      <div className="pt-3 pl-1">
        <PanelTitle>People staying - Flow</PanelTitle>
      </div>
      <div className="mt-[11px] flex h-[21px] border-b border-[#c8c8c8]">
        <div className="flex w-[131px] items-center pt-[3px] pl-[6px]">Weekday of..</div>
        <div className="flex flex-1 items-center justify-center border-x border-[#c8c8c8] pt-[3px]">date - collected adjusted</div>
      </div>
      {flow.map((row) => (
        <div key={row.day} className="flex min-h-0 flex-1 border-b border-[#c8c8c8]">
          <div className="flex w-[88px] items-center pl-[6px] text-xs text-[#888]">{row.day}</div>
          <div className="flex w-4 items-center justify-center">
            <span className="rotate-180 whitespace-nowrap [writing-mode:vertical-rl]">Distinct count of ID</span>
          </div>
          <div className="relative w-[27px] text-[13px] font-light text-[#666]">
            {[0, 20, 40, 60].map((t) => (
              <span
                key={t}
                className={`absolute right-[7px] leading-4 ${t === 0 ? "" : "translate-y-1/2"}`}
                style={{ bottom: `${(t / axisMax) * 100}%` }}
              >
                {t}
              </span>
            ))}
          </div>
          <div className="relative grid flex-1 grid-cols-7 border-x border-[#c8c8c8]">
            {[20, 40, 60].map((t) => (
              <span key={t} className="absolute inset-x-0 h-px bg-[#ececec]" style={{ bottom: `${(t / axisMax) * 100}%` }} />
            ))}
            {row.values.map((v, i) => (
              <div key={i} className="relative flex h-full flex-col items-center justify-end">
                <span className="text-[13px] leading-5">{v}</span>
                <span className="w-[30px] bg-[#0593d6]" style={{ height: `${(v / axisMax) * 100}%` }} />
              </div>
            ))}
          </div>
        </div>
      ))}
      <div className="flex h-[21px]">
        <div className="w-[131px]" />
        <div className="grid flex-1 grid-cols-7 border-x border-[#c8c8c8] text-center text-[13px] leading-[22px] font-light text-[#555]">
          {hours.map((h) => (
            <span key={h}>{h}</span>
          ))}
        </div>
      </div>
    </section>
  );
}

type Slice = { to: number; color: string };
type PieNote = { name: string; pct: string; n: string; x: number; y: number };

function PiePanel({ title, slices, notes }: { title: string; slices: Slice[]; notes: PieNote[] }) {
  const radius = 88;
  const at = (deg: number) => {
    const a = (deg * Math.PI) / 180;
    return `${(radius * Math.sin(a)).toFixed(2)} ${(-radius * Math.cos(a)).toFixed(2)}`;
  };
  return (
    <section className="flex min-w-0 flex-1 flex-col items-center">
      <div className="w-full pt-[10px] pl-2">
        <PanelTitle>{title}</PanelTitle>
      </div>
      <svg width="412" height="300" viewBox="-206 -150 412 300" className="mt-9 max-w-full overflow-visible" role="img" aria-label={title}>
        {slices.map((s, i) => {
          const from = i === 0 ? 0 : slices[i - 1].to;
          return <path key={s.to} d={`M0 0L${at(from)}A${radius} ${radius} 0 ${s.to - from > 180 ? 1 : 0} 1 ${at(s.to)}Z`} fill={s.color} />;
        })}
        {notes.map((n) => (
          <g key={n.name} textAnchor="middle" dominantBaseline="central">
            <text x={n.x} y={n.y} fontSize="12" fill="#2d8db8">{n.name}</text>
            <text x={n.x} y={n.y + 16} fontSize="13" fill="#333">{n.pct}</text>
            <text x={n.x} y={n.y + 33} fontSize="13" fill="#333">{n.n}</text>
          </g>
        ))}
      </svg>
    </section>
  );
}

const activities: [string, number, string][] = [
  ["Socializing", 164, "bg-[#2c5985] text-white"],
  ["Passive recreation / Hanging out / People watc..", 47, "bg-[#7bbfca]"],
  ["Waiting for public transport", 28, "bg-[#92cdcf]"],
  ["Using Electronics", 16, "bg-[#a3d7d2]"],
  ["Work (in general)", 9, "bg-[#addcd5]"],
  ["Drinking", 5, "bg-[#b4e0d6]"],
  ["Other:Esperando alimentos", 3, "bg-[#b7e2d7]"],
  ["Other:Esperando niÃ±os", 2, "bg-[#b9e3d8]"],
  ["Driver / Delivery", 2, "bg-[#b9e3d8]"],
  ["Smoking", 1, "bg-[#bbe4d8]"],
  ["Reading / Writing", 1, "bg-[#bbe4d8]"],
  ["Play (all ages)", 1, "bg-[#bbe4d8]"],
  ["Maintenance or Civic Work", 1, "bg-[#bbe4d8]"],
  ["Eating snack", 1, "bg-[#bbe4d8]"],
  ["Carrying grocery bag", 1, "bg-[#bbe4d8]"],
];

function ActivityPanel() {
  return (
    <section className="min-w-0 flex-1 pl-[3px]">
      <div className="pt-[10px] pl-1">
        <PanelTitle>People - Activity</PanelTitle>
      </div>
      <table className="mt-[13px] w-[340px] border-collapse border-b border-[#c8c8c8] text-xs text-[#333]">
        <thead>
          <tr className="h-[19px]">
            <th className="border-b border-[#c8c8c8] p-0 pl-[6px] font-normal">
              <div className="flex items-center justify-between pr-4">
                Foodscape - Activity
                <Svg size={12} className="text-[#555]">
                  <path d="M1 2h10M1 6h6M1 10h3" strokeWidth="1.6" />
                </Svg>
              </div>
            </th>
            <td className="w-[60px]" />
          </tr>
        </thead>
        <tbody>
          {activities.map(([name, n, tone]) => (
            <tr key={name} className="h-5">
              <th className="p-0 pl-[6px] text-left font-normal whitespace-nowrap">{name}</th>
              <td className={`p-0 pr-1 text-right text-[13px] ${tone}`}>{n}</td>
            </tr>
          ))}
        </tbody>
      </table>
    </section>
  );
}

function Dashboard() {
  return (
    <main className="flex min-w-0 flex-1 flex-col bg-white pt-[6px] pr-[10px] pb-[10px] pl-2 font-['Noto_Sans',sans-serif]">
      <div className="flex h-[487px]">
        <div className="flex w-3/4 min-w-0">
          <ZonaPanel />
          <MapPanel />
          <Legend />
        </div>
        <div className="flex w-1/4 min-w-0 pt-px pb-[3px]">
          <DashV />
          <FlowPanel />
        </div>
      </div>
      <DashH />
      <div className="grid flex-1 grid-cols-4">
        <div className="flex min-w-0">
          <PiePanel
            title="People - Age"
            slices={[
              { to: 5.8, color: "#c39633" },
              { to: 74.8, color: "#72b6e6" },
              { to: 133.7, color: "#0098ff" },
              { to: 326.7, color: "#075c78" },
              { to: 360, color: "#023a5c" },
            ]}
            notes={[
              { name: "65+", pct: "9,0%", n: "20", x: -40, y: -129 },
              { name: "0-4", pct: "0,9%", n: "2", x: 19, y: -132 },
              { name: "5-14", pct: "18,6%", n: "41", x: 76, y: -111 },
              { name: "15-24", pct: "14,9%", n: "33", x: 105, y: 30 },
              { name: "25-64", pct: "56,6%", n: "125", x: -87, y: 66 },
            ]}
          />
        </div>
        <div className="flex min-w-0">
          <DashV />
          <PiePanel
            title="People - Posture"
            slices={[
              { to: 4.4, color: "#c39633" },
              { to: 7, color: "#d4b65c" },
              { to: 25.2, color: "#e6d898" },
              { to: 37.7, color: "#0098ff" },
              { to: 40.5, color: "#66aee4" },
              { to: 360, color: "#cfe1f5" },
            ]}
            notes={[
              { name: "Lying", pct: "1,8%", n: "4", x: 18, y: -131 },
              { name: "Sitting Public Bench", pct: "0,9%", n: "2", x: 113, y: -111 },
              { name: "Standing", pct: "86,0%", n: "190", x: -57, y: 94 },
            ]}
          />
        </div>
        <div className="flex min-w-0">
          <DashV />
          <PiePanel
            title="People - Gender"
            slices={[
              { to: 166.7, color: "#95dad6" },
              { to: 348.3, color: "#009a93" },
              { to: 360, color: "#015b4d" },
            ]}
            notes={[
              { name: "Gender neutral or Gender non-conforming", pct: "3,2%", n: "7", x: -85, y: -131 },
              { name: "Feminine", pct: "45,7%", n: "101", x: 115, y: -52 },
              { name: "Masculine", pct: "51,1%", n: "113", x: -117, y: 28 },
            ]}
          />
        </div>
        <div className="flex min-w-0">
          <DashV />
          <ActivityPanel />
        </div>
      </div>
    </main>
  );
}

/* ------------------------------------------------------------------- footer */

const GridIcon = () => (
  <Svg size={13}>
    <path d="M1.500 1.500h10v10h-10zM6.500 1.500v10M1.500 6.500h10" strokeWidth="1.2" />
  </Svg>
);

function Tabs() {
  const cell = "flex items-center gap-1 border-r border-[#c8c8c8] whitespace-nowrap";
  return (
    <nav className="flex h-8 border-y border-[#c8c8c8] bg-[#e6e6e6] font-['Roboto',sans-serif] text-[13px] text-[#666]">
      <button type="button" className={`${cell} w-[131px] pl-2`}>
        <Svg size={12}>
          <ellipse cx="6" cy="2.500" rx="4" ry="1.500" />
          <path d="M2 2.500v7c0 2 8 2 8 0v-7" />
        </Svg>
        Data Source
      </button>
      <button type="button" className={`${cell} w-[156px] bg-white pl-[7px] font-bold text-[#444]`}>
        <GridIcon />
        People spending time
      </button>
      <button type="button" className={`${cell} w-24 pl-[6px]`}>
        <GridIcon />
        Foodplaces
      </button>
      <button type="button" className={`${cell} w-[115px] pl-[5px]`}>
        <GridIcon />
        People moving
      </button>
      <button type="button" className={`${cell} w-[125px] pl-[5px]`}>Collection overview</button>
      <button type="button" className={`${cell} w-[102px] border-b-4 border-b-[#577a97] pt-1 pl-[5px]`}>People mapped</button>
      <button type="button" className={`${cell} w-[65px] pl-[5px]`}>Sheet 26</button>
      <button type="button" className={`${cell} w-[63px] pl-[5px]`}>Sheet 27</button>
      <button type="button" aria-label="New worksheet" className={`${cell} w-8 justify-center`}>
        <Svg size={16}>
          <path d="M9 12.500H1.500v-11h12V8" strokeWidth="1.2" />
          <path d="M5 7v3M7.500 4v6M10 6v3" />
          <path d="M9 12h7M12.500 8.500v7" strokeWidth="2" />
        </Svg>
      </button>
      <button type="button" aria-label="New dashboard" className={`${cell} w-8 justify-center`}>
        <Svg size={16}>
          <path d="M9 11.500H1.500v-10h10V8M6.500 1.500v10M1.500 6.500h10" strokeWidth="1.2" />
          <path d="M9 12h7M12.500 8.500v7" strokeWidth="2" />
        </Svg>
      </button>
      <button type="button" aria-label="New story" className={`${cell} w-8 justify-center`}>
        <Svg size={16}>
          <path d="M6.500 12.500l-5-2v-9l5 2 5-2V8M6.500 3.500v9" strokeWidth="1.2" />
          <path d="M9 12h7M12.500 8.500v7" strokeWidth="2" />
        </Svg>
      </button>
    </nav>
  );
}

function StatusBar() {
  const nav: [string, string][] = [
    ["First", "M1 0h1v8H1zM7 0v8L3 4z"],
    ["Previous", "M6 0v8L2 4z"],
    ["Next", "M2 0v8l4-4z"],
    ["Last", "M6 0h1v8H6zM1 0v8l4-4z"],
  ];
  const rule = "h-full border-l border-[#c8c8c8]";
  return (
    <footer className="flex h-5 items-center justify-end bg-[#ebebeb] text-[#b4b4b4]">
      <div className={`${rule} w-[127px]`} />
      <div className={`${rule} w-[27px]`} />
      <div className={`${rule} w-[27px]`} />
      <div className={`${rule} w-[47px]`} />
      <div className={`${rule} flex w-[71px] items-center justify-between px-[7px]`}>
        {nav.map(([label, d]) => (
          <button type="button" key={label} aria-label={label}>
            <svg width="8" height="8" viewBox="0 0 8 8" fill="currentColor" aria-hidden="true">
              <path d={d} />
            </svg>
          </button>
        ))}
      </div>
      <div className={`${rule} flex w-[68px] items-center gap-[10px] pl-2`}>
        <button type="button" aria-label="Show sheet sorter">
          <svg width="11" height="11" viewBox="0 0 11 11" fill="currentColor" aria-hidden="true">
            <path d="M0 0h3v3H0zM4 0h3v3H4zM8 0h3v3H8zM0 4h3v3H0zM4 4h3v3H4zM8 4h3v3H8zM0 8h3v3H0zM4 8h3v3H4zM8 8h3v3H8z" />
          </svg>
        </button>
        <button type="button" aria-label="Show filmstrip">
          <svg width="11" height="11" viewBox="0 0 11 11" fill="currentColor" aria-hidden="true">
            <path d="M0 0h11v7H0zM0 8h3v3H0zM4 8h3v3H4zM8 8h3v3H8z" />
          </svg>
        </button>
        <button type="button" aria-label="Show tabs" className="size-[11px] bg-[#666]" />
      </div>
    </footer>
  );
}

export default function App() {
  return (
    <div className="flex min-h-screen flex-col bg-white">
      <TitleBar />
      <MenuBar />
      <Toolbar />
      <div className="flex flex-1">
        <SidePane />
        <Dashboard />
        <div className="w-[26px] shrink-0 border-t border-r-2 border-l border-[#c8c8c8] border-l-[#eee] bg-[#f7f7f7]" />
      </div>
      <Tabs />
      <StatusBar />
    </div>
  );
}
